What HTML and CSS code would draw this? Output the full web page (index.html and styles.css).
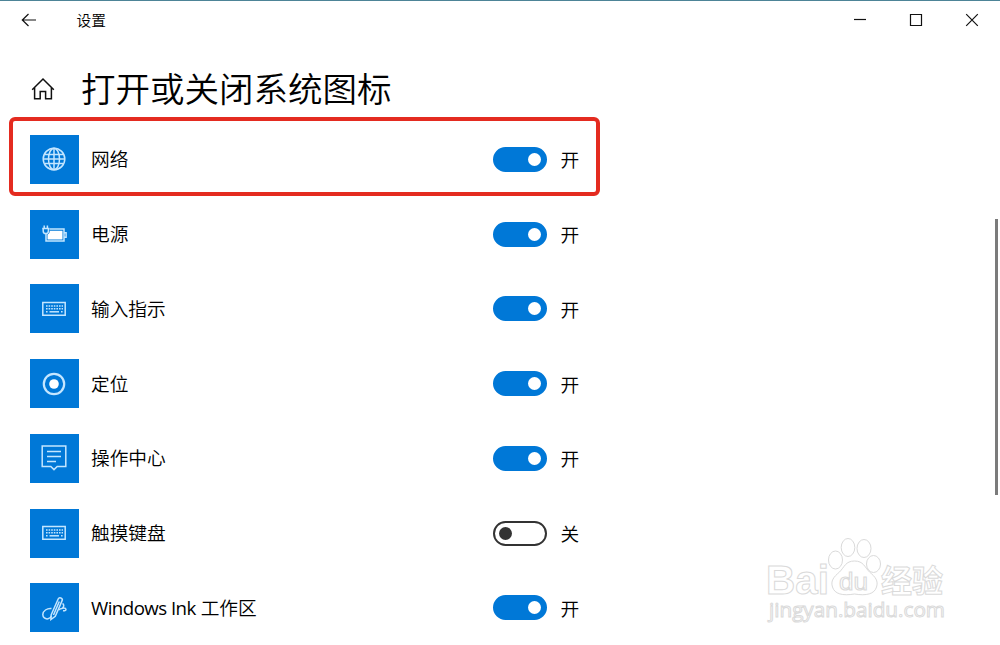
FILE: index.html
```html
<!DOCTYPE html>
<html lang="zh-CN">
<head>
    <meta charset="UTF-8">
    <meta name="viewport" content="width=device-width, initial-scale=1.0">
    <title>设置</title>
    <link rel="stylesheet" href="styles.css">
</head>
<body>
    <!-- Title bar -->
    <header class="titlebar">
        <svg class="back" width="16" height="14" viewBox="0 0 16 14"><path d="M7.5 1 1.3 7l6.2 6M1.3 7H15"/></svg>
        <span class="app-name">设置</span>
        <div class="window-buttons">
            <svg width="14" height="14" viewBox="0 0 14 14"><path d="M1 6.5h12"/></svg>
            <svg width="14" height="14" viewBox="0 0 14 14"><path d="M1.5 1.5h11v11h-11z"/></svg>
            <svg width="14" height="14" viewBox="0 0 14 14"><path d="M1.2 1.2l11.6 11.6M12.8 1.2L1.2 12.8"/></svg>
        </div>
    </header>

    <!-- Page heading -->
    <div class="heading">
        <svg class="home" width="24" height="24" viewBox="0 0 24 24"><path d="M1.2 12.8 12 2l10.8 10.8M3.6 10.8v10.9h5.6v-7.2h5.4v7.2h5.8V10.8"/></svg>
        <h1>打开或关闭系统图标</h1>
    </div>

    <!-- System icons -->
    <main class="list">
        <div class="row">
            <div class="tile">
                <svg width="26" height="26" viewBox="0 0 26 26"><circle cx="13" cy="13" r="10.8"/><ellipse cx="13" cy="13" rx="5.5" ry="10.8"/><path d="M3.5 8.5h19M3.5 17.5h19M2.2 13h21.6M13 2.2v21.6"/></svg>
            </div>
            <span class="label">网络</span>
            <div class="toggle on"></div>
            <span class="state">开</span>
            <div class="highlight"></div>
        </div>
        <div class="row">
            <div class="tile">
                <svg width="26" height="26" viewBox="0 0 26 26"><path d="M8.500 8h14.500v12H5v-7.500M23.500 11.800h1.600v4.400h-1.600M3.200 4.500v3M6.400 4.500v3"/><path class="fill" d="M8.800 9.800h12.700v8.700H6.500v-5c1.500-.6 2.300-1.700 2.300-3.700z"/><path d="M1.200 7.500h7.200M2.200 7.500v2.500c0 1.700 1 2.600 2.600 2.600s2.600-.9 2.600-2.600V7.500"/></svg>
            </div>
            <span class="label">电源</span>
            <div class="toggle on"></div>
            <span class="state">开</span>
        </div>
        <div class="row">
            <div class="tile">
                <svg width="26" height="26" viewBox="0 0 26 26"><path d="M1.800 6.500h22.400v12.800H1.800z"/><path class="keys" d="M5 10h17M5 12.800h17M5 15.800h2M20 15.800h2"/><path d="M8.500 15.800h9.500"/></svg>
            </div>
            <span class="label">输入指示</span>
            <div class="toggle on"></div>
            <span class="state">开</span>
        </div>
        <div class="row">
            <div class="tile">
                <svg width="26" height="26" viewBox="0 0 26 26"><circle class="ring" cx="13" cy="13" r="10.200"/><circle class="fill" cx="13" cy="13" r="4.800"/></svg>
            </div>
            <span class="label">定位</span>
            <div class="toggle on"></div>
            <span class="state">开</span>
        </div>
        <div class="row">
            <div class="tile">
                <svg width="26" height="26" viewBox="0 0 26 26"><path d="M1.200 1h23.600v20.500h-8.600L13 24.600l-3.200-3.100H1.200zM6 6.500h14M6 11.500h14M6 16.500h9"/></svg>
            </div>
            <span class="label">操作中心</span>
            <div class="toggle on"></div>
            <span class="state">开</span>
        </div>
        <div class="row">
            <div class="tile">
                <svg width="26" height="26" viewBox="0 0 26 26"><path d="M1.800 6.500h22.400v12.800H1.800z"/><path class="keys" d="M5 10h17M5 12.800h17M5 15.800h2M20 15.800h2"/><path d="M8.500 15.800h9.500"/></svg>
            </div>
            <span class="label">触摸键盘</span>
            <div class="toggle"></div>
            <span class="state">关</span>
        </div>
        <div class="row">
            <div class="tile">
                <svg width="26" height="26" viewBox="0 0 26 26"><path d="M10.500 13.500C6 13 1.800 16 1.800 19.500c0 3 2.500 4.800 5.200 4.300 2-.4 3-1.500 3.500-2.800"/><path d="M10.200 19.800 17.300 3.800c.9-2.100 4.700-.6 3.900 1.600L14.300 21.300l-4.400 3.200zM18.300 6.500l-5.800 13.500"/><path d="M21.500 8.500c1.800 1 1.600 3-.2 5M17.500 15c2-2 7.200-2.700 7.500-.6.100 1.300-1.500 1.500-3 1.300"/></svg>
            </div>
            <span class="label"><span class="latin">Windows Ink</span> 工作区</span>
            <div class="toggle on"></div>
            <span class="state">开</span>
        </div>
    </main>

    <div class="scrollbar"></div>

    <!-- Watermark -->
    <svg class="watermark" width="190" height="96" viewBox="0 0 190 96">
        <text class="brand" x="2" y="58" textLength="63" lengthAdjust="spacingAndGlyphs">Bai</text>
        <ellipse cx="71.500" cy="24" rx="7" ry="9"/>
        <ellipse cx="84" cy="11.500" rx="6.800" ry="9"/>
        <ellipse cx="100" cy="12.500" rx="7" ry="9"/>
        <ellipse cx="109.500" cy="28" rx="7" ry="8.500"/>
        <path d="M90.500 25c-9 0-10 6-15 11-6 5-9 9-7 15 2 7 10 9 22 7 12 2 20 0 22-7 2-6-1-10-7-15-5-5-6-11-15-11z"/>
        <text class="du" x="75" y="54" textLength="29" lengthAdjust="spacingAndGlyphs">du</text>
        <text class="cjk" x="117" y="56" textLength="62" lengthAdjust="spacingAndGlyphs">经验</text>
        <text class="url" x="5" y="81" textLength="176" lengthAdjust="spacingAndGlyphs">jingyan.baidu.com</text>
    </svg>
</body>
</html>
```
FILE: styles.css
```css
* {
    box-sizing: border-box;
}
body {
    margin: 0;
    height: 645px;
    overflow: hidden;
    position: relative;
    background-color: #fff;
    border-top: 1px solid #4d8497;
    color: #000;
    font-family: "Open Sans", "Noto Sans CJK SC", sans-serif;
}
svg {
    display: block;
    fill: none;
    stroke: #111;
    stroke-width: 1.2;
}
.titlebar {
    display: flex;
    align-items: center;
    height: 37px;
    padding: 0 21.5px 0 21px;
}
.app-name {
    margin-left: 39.5px;
    font-size: 14.7px;
    font-weight: 350;
    line-height: 20px;
}
.window-buttons {
    display: flex;
    gap: 42px;
    margin-left: auto;
}
.heading {
    display: flex;
    align-items: center;
    height: 84px;
    padding: 17px 0 0 31px;
}
.home {
    margin-top: 1px;
    stroke-width: 1.5;
}
h1 {
    margin: -4px 0 0 26px;
    font-family: "Noto Sans CJK SC", sans-serif;
    font-size: 34.5px;
    font-weight: 350;
    line-height: 50px;
}
.list {
    width: 600px;
}
.row {
    position: relative;
    display: flex;
    align-items: center;
    height: 74.75px;
    padding-left: 29.5px;
    font-size: 18.7px;
    font-weight: 350;
}
.tile {
    display: flex;
    align-items: center;
    justify-content: center;
    width: 49px;
    height: 49px;
    background-color: #0078d7;
}
.tile svg {
    stroke: #c4e6ff;
    stroke-width: 1.5;
}
.tile .fill {
    fill: #fff;
    stroke: none;
}
.tile .ring {
    stroke-width: 2.2;
}
.tile .keys {
    stroke-dasharray: 1.6 1;
}
.label {
    width: 401.5px;
    margin-left: 12.5px;
    line-height: 28px;
}
.latin {
    font-weight: 400;
    letter-spacing: -0.55px;
}
.toggle {
    display: flex;
    align-items: center;
    width: 54px;
    height: 25px;
    padding: 0 4px;
    border: 2px solid #333;
    border-radius: 13px;
}
.toggle::before {
    content: "";
    width: 13px;
    height: 13px;
    border-radius: 50%;
    background-color: #333;
}
.toggle.on {
    justify-content: flex-end;
    border-color: #0078d7;
    background-color: #0078d7;
}
.toggle.on::before {
    background-color: #fff;
}
.state {
    margin: 2px 0 0 14px;
    line-height: 28px;
}
.highlight {
    position: absolute;
    top: -5px;
    left: 9px;
    width: 591px;
    height: 79px;
    border: 4px solid #e42b20;
    border-radius: 6px;
}
.scrollbar {
    position: absolute;
    top: 218px;
    left: 995px;
    width: 2.5px;
    height: 276px;
    background-color: #7b7b7b;
}
.watermark {
    position: absolute;
    top: 535px;
    left: 764px;
    fill: #fff;
    stroke: #dadada;
    stroke-width: 1;
    font-family: "Liberation Sans", Arial, sans-serif;
}
.brand {
    font-size: 40px;
    font-weight: bold;
}
.du {
    font-size: 23px;
}
.cjk {
    font-family: "Noto Sans CJK SC", sans-serif;
    font-size: 31px;
    font-weight: bold;
}
.url {
    font-family: "Open Sans", sans-serif;
    font-size: 20px;
}
```
